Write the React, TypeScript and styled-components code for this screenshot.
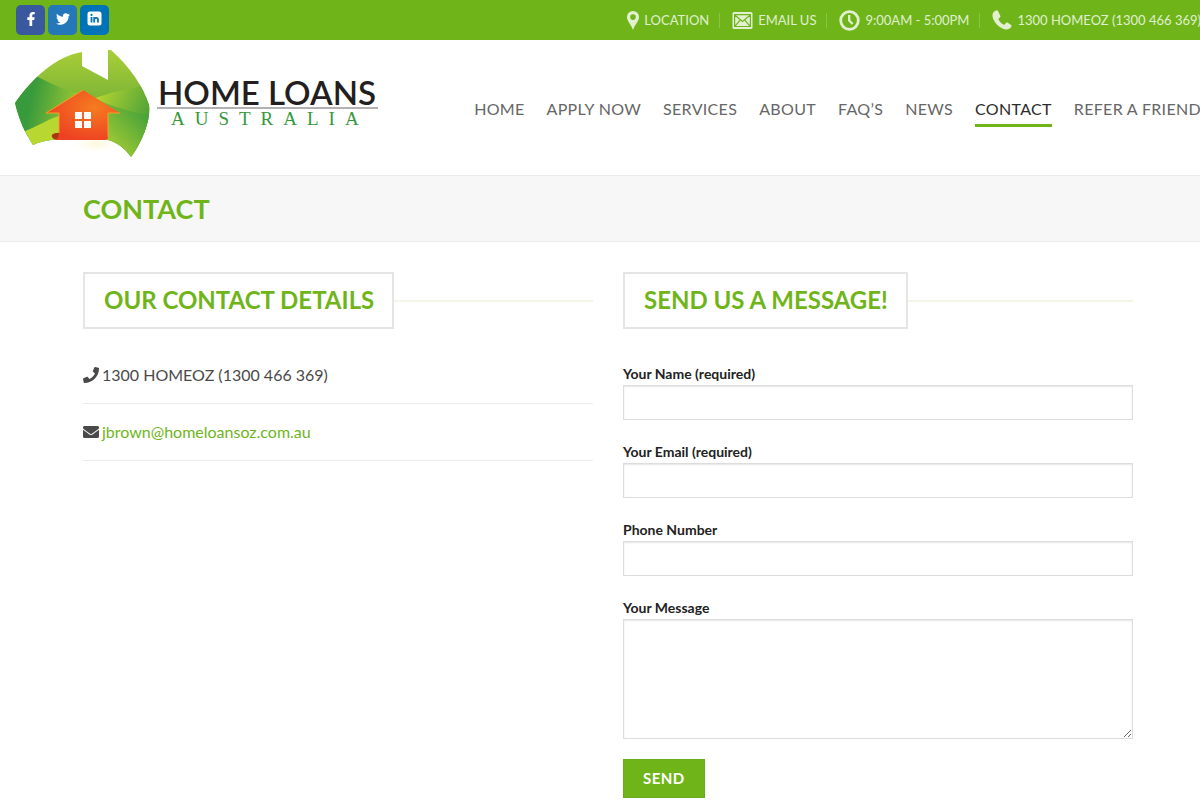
import React from "react";
import styled, { createGlobalStyle } from "styled-components";
import { FaEnvelope, FaFacebookF, FaPhone, FaTwitter } from "react-icons/fa";

const green = "#6fb51a";

const GlobalStyle = createGlobalStyle`
  *, *::before, *::after { box-sizing: border-box; }
  html { overflow-x: hidden; background: #fff; }
  body {
    margin: 0;
    overflow-x: hidden;
    color: #4a4a4a;
    font-family: Lato, "Open Sans", sans-serif;
    font-size: 16px;
    line-height: 26px;
  }
  a { color: inherit; text-decoration: none; }
  h1, h2, p, ul { margin: 0; padding: 0; }
  ul { list-style: none; }
`;

const Page = styled.div`
  width: calc(100% + 16px);
`;

const TopBar = styled.div`
  display: flex;
  align-items: center;
  justify-content: space-between;
  height: 40px;
  padding: 0 15px 0 16px;
  background: ${green};
`;

const SocialList = styled.div`
  display: flex;
  gap: 3px;
`;

const SocialLink = styled.a<{ $color: string }>`
  display: flex;
  align-items: center;
  justify-content: center;
  width: 29px;
  height: 30px;
  padding-bottom: 3px;
  border-radius: 5px;
  background: ${(p) => p.$color};
  color: #fff;
`;

const InfoList = styled.ul`
  display: flex;
  align-items: center;
`;

const InfoItem = styled.li`
  display: flex;
  align-items: center;
  & + &::before {
    content: "";
    width: 1px;
    height: 15px;
    margin: 0 12px 0 10px;
    background: rgba(255, 255, 255, 0.2);
  }
`;

const InfoLink = styled.a`
  display: flex;
  align-items: center;
  gap: 5px;
  color: rgba(255, 255, 255, 0.8);
  font-size: 13px;
  line-height: 20px;
  white-space: nowrap;
`;

const Header = styled.header`
  display: flex;
  align-items: center;
  justify-content: space-between;
  height: 135px;
  padding: 0 15px;
`;

const Logo = styled.a`
  display: flex;
  align-items: flex-start;
  gap: 6px;
  height: 115px;
`;

const Wordmark = styled.span`
  display: flex;
  flex-direction: column;
  width: 221px;
  padding-top: 27px;
`;

const WordmarkName = styled.span`
  padding-left: 1px;
  border-bottom: 2px solid #b3b0b1;
  color: #231f20;
  font-size: 33px;
  font-weight: 600;
  line-height: 30px;
  white-space: nowrap;
`;

const WordmarkCountry = styled.span`
  padding-left: 14px;
  color: #35983a;
  font-family: "Liberation Serif", serif;
  font-size: 19px;
  line-height: 20px;
  letter-spacing: 10px;
  white-space: nowrap;
`;

const Nav = styled.nav`
  display: flex;
  gap: 22px;
`;

const NavLink = styled.a<{ $active?: boolean }>`
  padding-top: 8px;
  padding-bottom: 3px;
  border-bottom: 3px solid ${(p) => (p.$active ? green : "transparent")};
  color: ${(p) => (p.$active ? "#2b2b2b" : "#666")};
  line-height: 24px;
  letter-spacing: 0.02em;
  white-space: nowrap;
`;

const TitleBar = styled.div`
  padding: 16px 0;
  border-top: 1px solid #ececec;
  border-bottom: 1px solid #ececec;
  background: #f7f7f7;
`;

const Container = styled.div`
  max-width: 1080px;
  margin: 0 auto;
  padding: 0 15px;
`;

const PageTitle = styled.h1`
  color: ${green};
  font-size: 27px;
  line-height: 33px;
`;

const Columns = styled.main`
  display: grid;
  grid-template-columns: 1fr 1fr;
  gap: 30px;
  padding: 30px 0;
`;

const SectionTitle = styled.h2`
  display: flex;
  align-items: center;
  color: ${green};
  font-size: 24px;
  line-height: 33px;
  &::after {
    content: "";
    flex: 1;
    height: 2px;
    background: #f1f6e8;
  }
`;

const SectionTitleText = styled.span`
  padding: 9px 18px 11px 19px;
  border: 2px solid #e5e5e5;
`;

const DetailList = styled.ul`
  padding-top: 18px;
`;

const Detail = styled.li`
  display: flex;
  align-items: center;
  gap: 3px;
  height: 57px;
  border-bottom: 1px solid #ececec;
`;

const MailLink = styled.a`
  color: ${green};
`;

const Form = styled.form`
  display: flex;
  flex-direction: column;
  align-items: flex-start;
  gap: 20px;
  padding-top: 33px;
`;

const Field = styled.label`
  display: block;
  width: 100%;
  color: #222;
  font-size: 14px;
  font-weight: 700;
  line-height: 23px;
`;

const TextInput = styled.input`
  display: block;
  width: 100%;
  height: 35px;
  padding: 0 12px;
  border: 1px solid #ddd;
  border-radius: 0;
  background: #fff;
  box-shadow: inset 0 1px 2px rgba(0, 0, 0, 0.1);
  color: #333;
  font: inherit;
`;

const MessageInput = styled(TextInput).attrs({ as: "textarea" })`
  height: 120px;
  padding: 10px 12px;
  resize: vertical;
`;

const SendButton = styled.button`
  height: 39px;
  padding: 0 19px;
  border: 1px solid rgba(0, 0, 0, 0.05);
  background: ${green};
  color: #fff;
  font: 700 15px/37px Lato, sans-serif;
  letter-spacing: 0.03em;
`;

const PinIcon = () => (
  <svg width="12" height="19" viewBox="0 0 12 19" fill="currentColor" aria-hidden="true">
    <path fillRule="evenodd" d="M6 0a6 6 0 0 0-6 6.2C0 10 3.600 12.500 6 19 8.400 12.500 12 10 12 6.200A6 6 0 0 0 6 0Zm0 3.300a2.800 2.800 0 1 1 0 5.600 2.800 2.800 0 0 1 0-5.600Z" />
  </svg>
);

const MailIcon = () => (
  <svg width="21" height="17" viewBox="0 0 21 17" aria-hidden="true">
    <rect x="0.500" y="0" width="20" height="17" rx="1.500" fill="currentColor" />
    <path d="M3 3.200 10.500 9.500 18 3.200M3 14.200l5.200-6M18 14.200l-5.200-6M2.600 2.700h15.800v11.800H2.600z" fill="none" stroke={green} strokeWidth="1.200" />
  </svg>
);

const ClockIcon = () => (
  <svg width="21" height="21" viewBox="0 0 21 21" fill="none" stroke="currentColor" aria-hidden="true">
    <circle cx="10.500" cy="10.500" r="8.800" strokeWidth="2.800" />
    <path d="M10.200 5v5.600l3.400 3.400" strokeWidth="2.300" />
  </svg>
);

const HandsetIcon = () => (
  <svg width="20" height="20" viewBox="0 0 20 20" fill="currentColor" aria-hidden="true">
    <path d="M4.300.4C2.300.8.6 2.700.5 5c-.2 3.400 2.300 7.500 5.200 10.200 2.800 2.700 6.200 4.500 9.200 4.300 2.100-.2 3.900-1.500 4.600-3.200.2-.5 0-.9-.4-1.200l-3.700-2.500c-.5-.3-1-.3-1.300.1l-1.500 1.700c-.3.300-.7.400-1.100.1-2-1.100-3.900-3-5-5.100-.2-.4-.1-.8.2-1l1.400-1.200c.4-.3.500-.8.300-1.300L6 .9C5.600.4 5.100.2 4.300.4Z" />
  </svg>
);

const LinkedInIcon = () => (
  <svg width="15" height="15" viewBox="0 0 15 15" fill="none" aria-hidden="true">
    <rect x="0.500" y="0.500" width="14" height="14" rx="2.500" fill="#fff" />
    <path d="M4.500 6v5.500M7.200 11.500V6M7.200 8.600c0-2.300 3.800-2.400 3.800.1v2.800" stroke="#0072b7" strokeWidth="1.800" />
    <circle cx="4.500" cy="3.900" r="1.100" fill="#0072b7" />
  </svg>
);

const LogoMark = () => (
  <svg width="136" height="115" viewBox="0 0 136 115" aria-hidden="true">
    <defs>
      <linearGradient id="back" x1="0" y1="0" x2="0" y2="1">
        <stop offset="0" stopColor="#a9ce36" />
        <stop offset="0.700" stopColor="#62a638" />
        <stop offset="1" stopColor="#3c9838" />
      </linearGradient>
      <linearGradient id="leftHill" x1="0" y1="0.300" x2="1" y2="0.500">
        <stop offset="0.250" stopColor="#379a3b" />
        <stop offset="1" stopColor="#a4cb34" />
      </linearGradient>
      <linearGradient id="rightHill" x1="0" y1="0" x2="1" y2="0.400">
        <stop offset="0" stopColor="#c0d930" />
        <stop offset="1" stopColor="#52a438" />
      </linearGradient>
      <linearGradient id="frontHill" x1="0" y1="1" x2="0.900" y2="0">
        <stop offset="0.250" stopColor="#a6cc33" />
        <stop offset="1" stopColor="#359a3b" />
      </linearGradient>
      <radialGradient id="house" cx="0.650" cy="0.350" r="0.700">
        <stop offset="0" stopColor="#f57c20" />
        <stop offset="1" stopColor="#ee4023" />
      </radialGradient>
      <radialGradient id="glow">
        <stop offset="0" stopColor="#fdf8d8" />
        <stop offset="1" stopColor="#fff" stopOpacity="0" />
      </radialGradient>
      <clipPath id="land">
        <path d="M0 53C18 27 42 6 67 2v14l26 14V0h3c18 16 33 37 38 55 2 12-5 35-18 52-7-10-16-16-27-18H53c-13 0-24 1-35 6C10 83 4 70 0 53Z" />
      </clipPath>
    </defs>
    <ellipse cx="82" cy="94" rx="30" ry="10" fill="url(#glow)" />
    <g clipPath="url(#land)">
      <path d="M0 0h136v115H0z" fill="url(#back)" />
      <path d="M0 20 23 27C44 38 56 42 68 44v30L10 82H0Z" fill="url(#leftHill)" />
      <path d="M10 81C24 76 34 68 50 64v30L18 96Z" fill="#b9d731" />
      <path d="M80 48c17-6 29-8 46-12l10 22v25H96Z" fill="url(#rightHill)" />
      <path d="M80 49c20 8 35 13 56 17v49h-28L90 88Z" fill="url(#frontHill)" />
    </g>
    <path d="M43 83c-5 0-7 2-6 4 1 2 3 3 6 3h3V80Z" fill="#a9360f" />
    <path d="M68 40 31 63h13v19c0 4-1 6-3 8h49c2 0 3-1 3-3V63h12Z" fill="url(#house)" />
    <path d="M68 40 31 63h13v20M93 87V63h12" fill="none" stroke="#f6a126" strokeWidth="1" />
    <path d="M60 62h7v7h-7zM69 62h7v7h-7zM60 71h7v7h-7zM69 71h7v7h-7z" fill="#fff" />
  </svg>
);

const infoItems = [
  { text: "LOCATION", icon: <PinIcon /> },
  { text: "EMAIL US", icon: <MailIcon /> },
  { text: "9:00AM - 5:00PM", icon: <ClockIcon /> },
  { text: "1300 HOMEOZ (1300 466 369)", icon: <HandsetIcon /> },
];

const navItems = ["HOME", "APPLY NOW", "SERVICES", "ABOUT", "FAQ’S", "NEWS", "CONTACT", "REFER A FRIEND"];

export default function App() {
  return (
    <Page>
      <GlobalStyle />
      <TopBar>
        <SocialList>
          <SocialLink href="#facebook" aria-label="Facebook" $color="#3a589d"><FaFacebookF size={14} /></SocialLink>
          <SocialLink href="#twitter" aria-label="Twitter" $color="#2478ba"><FaTwitter size={14} /></SocialLink>
          <SocialLink href="#linkedin" aria-label="LinkedIn" $color="#0072b7"><LinkedInIcon /></SocialLink>
        </SocialList>
        <InfoList>
          {infoItems.map((item) => (
            <InfoItem key={item.text}>
              <InfoLink href="#contact">{item.icon}{item.text}</InfoLink>
            </InfoItem>
          ))}
        </InfoList>
      </TopBar>
      <Header>
        <Logo href="#home">
          <LogoMark />
          <Wordmark>
            <WordmarkName>HOME LOANS</WordmarkName>
            <WordmarkCountry>AUSTRALIA</WordmarkCountry>
          </Wordmark>
        </Logo>
        <Nav>
          {navItems.map((item) => (
            <NavLink key={item} href="#nav" $active={item === "CONTACT"}>{item}</NavLink>
          ))}
        </Nav>
      </Header>
      <TitleBar>
        <Container><PageTitle>CONTACT</PageTitle></Container>
      </TitleBar>
      <Container>
        <Columns>
          <section>
            <SectionTitle><SectionTitleText>OUR CONTACT DETAILS</SectionTitleText></SectionTitle>
            <DetailList>
              <Detail><FaPhone size={16} />1300 HOMEOZ (1300 466 369)</Detail>
              <Detail><FaEnvelope size={16} /><MailLink href="mailto:jbrown@homeloansoz.com.au">jbrown@homeloansoz.com.au</MailLink></Detail>
            </DetailList>
          </section>
          <section>
            <SectionTitle><SectionTitleText>SEND US A MESSAGE!</SectionTitleText></SectionTitle>
            <Form>
              <Field>Your Name (required)<TextInput type="text" name="name" /></Field>
              <Field>Your Email (required)<TextInput type="email" name="email" /></Field>
              <Field>Phone Number<TextInput type="tel" name="phone" /></Field>
              <Field>Your Message<MessageInput name="message" /></Field>
              <SendButton type="submit">SEND</SendButton>
            </Form>
          </section>
        </Columns>
      </Container>
    </Page>
  );
}
